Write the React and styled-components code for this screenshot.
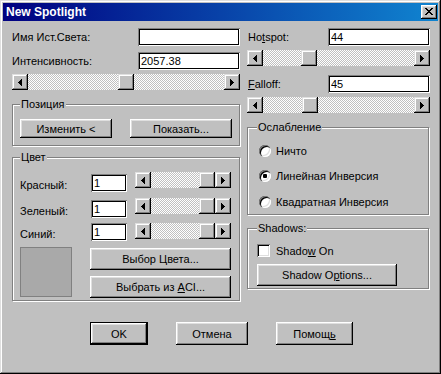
import React from 'react';
import styled, { createGlobalStyle } from 'styled-components';

const Global = createGlobalStyle`
  html, body { margin: 0; padding: 0; background: #c0c0c0; }
  body { font-family: "Liberation Sans", Arial, sans-serif; font-size: 11px; color: #000; }
  * { box-sizing: border-box; }
`;

const raised = `box-shadow: inset -1px -1px #000, inset 1px 1px #fff, inset -2px -2px #808080, inset 2px 2px #dfdfdf;`;
const raisedSoft = `box-shadow: inset -1px -1px #000, inset 1px 1px #dfdfdf, inset -2px -2px #808080, inset 2px 2px #fff;`;
const sunken = `box-shadow: inset 1px 1px #808080, inset -1px -1px #fff, inset 2px 2px #000, inset -2px -2px #000;`;

const Window = styled.div`
  width: 441px;
  height: 374px;
  padding: 3px;
  background: #c0c0c0;
  box-shadow: inset -1px -1px #000, inset 1px 1px #dfdfdf, inset -2px -2px #808080, inset 2px 2px #fff;
  display: flex;
  flex-direction: column;
`;

const TitleBar = styled.div`
  height: 18px;
  display: flex;
  align-items: center;
  justify-content: space-between;
  padding: 0 1px 0 3px;
  background: linear-gradient(90deg, #000080, #1084d0);
  color: #fff;
  font-weight: bold;
  font-size: 12px;
`;

const CloseButton = styled.div`
  width: 16px;
  height: 14px;
  background: #c0c0c0;
  ${raised}
  display: flex;
  align-items: center;
  justify-content: center;
  padding-bottom: 1px;
`;

const Body = styled.div`
  padding: 7px 9px 0 9px;
  display: flex;
  flex-direction: column;
`;

const Columns = styled.div`
  display: grid;
  grid-template-columns: 228px 183px;
  column-gap: 7px;
  align-items: start;
`;

const Column = styled.div`
  display: flex;
  flex-direction: column;
`;

const FieldRow = styled.div`
  display: flex;
  align-items: center;
  justify-content: space-between;
  height: 18px;
  margin-top: ${p => p.$mt || 0}px;
`;

const Label = styled.span`
  padding-left: ${p => p.$pl || 0}px;
  white-space: nowrap;
`;

const TextInput = styled.input`
  width: ${p => p.$w}px;
  height: 18px;
  border: none;
  outline: none;
  margin: 0;
  padding: 0 3px;
  background: #fff;
  font: inherit;
  color: #000;
  ${sunken}
`;

const ScrollWrap = styled.div`
  display: flex;
  width: ${p => (p.$w ? `${p.$w}px` : '100%')};
  height: 16px;
  margin-top: ${p => p.$mt || 0}px;
  flex-shrink: 0;
`;

const ArrowBtn = styled.div`
  width: 16px;
  height: 16px;
  flex-shrink: 0;
  background: #c0c0c0;
  ${raisedSoft}
  display: flex;
  align-items: center;
  justify-content: center;
`;

const Track = styled.div`
  flex: 1;
  display: flex;
  background-color: #c0c0c0;
  background-image: conic-gradient(#fff 25%, #c0c0c0 0 50%, #fff 0 75%, #c0c0c0 0);
  background-size: 2px 2px;
`;

const Thumb = styled.div`
  width: 16px;
  height: 16px;
  flex-shrink: 0;
  background: #c0c0c0;
  margin-left: calc((100% - 16px) * ${p => p.$frac});
  ${raisedSoft}
`;

const Arrow = ({ dir }) => (
  <svg width="4" height="7" viewBox="0 0 4 7" shapeRendering="crispEdges">
    {dir === 'left' ? (
      <g fill="#000">
        <rect x="3" y="0" width="1" height="7" />
        <rect x="2" y="1" width="1" height="5" />
        <rect x="1" y="2" width="1" height="3" />
        <rect x="0" y="3" width="1" height="1" />
      </g>
    ) : (
      <g fill="#000">
        <rect x="0" y="0" width="1" height="7" />
        <rect x="1" y="1" width="1" height="5" />
        <rect x="2" y="2" width="1" height="3" />
        <rect x="3" y="3" width="1" height="1" />
      </g>
    )}
  </svg>
);

const ScrollBar = ({ frac, w, mt }) => (
  <ScrollWrap $w={w} $mt={mt}>
    <ArrowBtn><Arrow dir="left" /></ArrowBtn>
    <Track><Thumb $frac={frac} /></Track>
    <ArrowBtn><Arrow dir="right" /></ArrowBtn>
  </ScrollWrap>
);

const Group = styled.fieldset`
  margin: ${p => p.$mt || 0}px 0 0 0;
  padding: ${p => p.$pad};
  width: ${p => p.$w}px;
  min-width: 0;
  border: 1px solid #808080;
  box-shadow: 1px 1px 0 #fff, inset 1px 1px 0 #fff;
`;

const Legend = styled.legend`
  padding: 0 1px;
  margin: 0;
  line-height: 13px;
  height: 13px;
  background: #c0c0c0;
`;

const Button = styled.div`
  width: ${p => p.$w}px;
  height: ${p => p.$h || 23}px;
  margin-top: ${p => p.$mt || 0}px;
  display: flex;
  align-items: center;
  justify-content: center;
  background: #c0c0c0;
  white-space: pre;
  flex-shrink: 0;
  ${raised}
`;

const DefaultButton = styled(Button)`
  border: 1px solid #000;
`;

const ButtonPair = styled.div`
  display: flex;
  align-items: center;
  gap: 18px;
`;

const ColorRow = styled.div`
  display: flex;
  align-items: flex-start;
  height: 18px;
  margin-top: ${p => p.$mt || 0}px;
`;

const ColorLabel = styled.span`
  width: 71px;
  line-height: 18px;
  padding-top: 2px;
`;

const ColorScroll = styled.div`
  margin-left: 8px;
  margin-top: ${p => -(p.$lift || 0)}px;
`;

const SwatchRow = styled.div`
  display: flex;
  align-items: flex-start;
  margin-top: 6px;
  gap: 18px;
`;

const Swatch = styled.div`
  width: 52px;
  height: 50px;
  background: #a9a9a9;
  border: 1px solid #808080;
`;

const ButtonStack = styled.div`
  display: flex;
  flex-direction: column;
  gap: 6px;
  padding-top: 1px;
`;

const OptionRow = styled.div`
  display: flex;
  align-items: center;
  height: 13px;
  margin-top: ${p => p.$mt || 0}px;
  gap: ${p => p.$gap || 5}px;
  padding-left: ${p => p.$pl || 0}px;
`;

const Radio = styled.span`
  position: relative;
  width: 12px;
  height: 12px;
  border-radius: 50%;
  background: #fff;
  flex-shrink: 0;
  box-shadow: inset 1px 1px #808080, inset 2px 2px #000, inset -1px -1px #fff, inset -2px -2px #dfdfdf;
  &::after {
    content: '';
    display: ${p => (p.$checked ? 'block' : 'none')};
    position: absolute;
    left: 4px;
    top: 4px;
    width: 4px;
    height: 4px;
    border-radius: 1px;
    background: #000;
  }
`;

const Checkbox = styled.span`
  width: 13px;
  height: 13px;
  background: #fff;
  flex-shrink: 0;
  box-shadow: inset 1px 1px #808080, inset -1px -1px #fff, inset 2px 2px #000, inset -2px -2px #dfdfdf;
`;

const U = styled.span`
  text-decoration: underline;
  text-underline-offset: 1px;
`;

const BottomRow = styled.div`
  display: flex;
  gap: 28px;
  padding-left: 78px;
  margin-top: 21px;
`;

const CloseGlyph = () => (
  <svg width="8" height="7" viewBox="0 0 8 7" shapeRendering="crispEdges">
    <g fill="#000">
      <rect x="0" y="0" width="2" height="1" /><rect x="6" y="0" width="2" height="1" />
      <rect x="1" y="1" width="2" height="1" /><rect x="5" y="1" width="2" height="1" />
      <rect x="2" y="2" width="4" height="1" />
      <rect x="3" y="3" width="2" height="1" />
      <rect x="2" y="4" width="4" height="1" />
      <rect x="1" y="5" width="2" height="1" /><rect x="5" y="5" width="2" height="1" />
      <rect x="0" y="6" width="2" height="1" /><rect x="6" y="6" width="2" height="1" />
    </g>
  </svg>
);

export default function App() {
  return (
    <>
      <Global />
      <Window>
        <TitleBar>
          <span>New Spotlight</span>
          <CloseButton><CloseGlyph /></CloseButton>
        </TitleBar>
        <Body>
          <Columns>
            <Column>
              <FieldRow>
                <Label>Имя Ист.Света:</Label>
                <TextInput $w={102} defaultValue="" />
              </FieldRow>
              <FieldRow $mt={6}>
                <Label>Интенсивность:</Label>
                <TextInput $w={102} defaultValue="2057.38" />
              </FieldRow>
              <ScrollBar frac={0.5} mt={4} />

              <Group $mt={8} $w={228} $pad="8px 7px 7px 7px">
                <Legend>Позиция</Legend>
                <ButtonPair>
                  <Button $w={92} $h={19}><span>Изменить &lt;</span></Button>
                  <Button $w={102} $h={19}><span>Показать...</span></Button>
                </ButtonPair>
              </Group>

              <Group $mt={5} $w={228} $pad="10px 7px 2px 7px">
                <Legend>Цвет</Legend>
                <ColorRow>
                  <ColorLabel>Красный:</ColorLabel>
                  <TextInput $w={36} defaultValue="1" />
                  <ColorScroll $lift={2}><ScrollBar frac={1} w={96} /></ColorScroll>
                </ColorRow>
                <ColorRow $mt={8}>
                  <ColorLabel>Зеленый:</ColorLabel>
                  <TextInput $w={36} defaultValue="1" />
                  <ColorScroll $lift={2}><ScrollBar frac={1} w={96} /></ColorScroll>
                </ColorRow>
                <ColorRow $mt={5}>
                  <ColorLabel>Синий:</ColorLabel>
                  <TextInput $w={36} defaultValue="1" />
                  <ColorScroll $lift={0}><ScrollBar frac={1} w={96} /></ColorScroll>
                </ColorRow>
                <SwatchRow>
                  <Swatch />
                  <ButtonStack>
                    <Button $w={141} $h={22}><span>Выбор Цвета...</span></Button>
                    <Button $w={141} $h={22}><span>Выбрать из <U>A</U>CI...</span></Button>
                  </ButtonStack>
                </SwatchRow>
              </Group>
            </Column>

            <Column>
              <FieldRow>
                <Label $pl={1}>Ho<U>t</U>spot:</Label>
                <TextInput $w={102} defaultValue="44" />
              </FieldRow>
              <ScrollBar frac={38 / 135} mt={4} />
              <FieldRow $mt={9}>
                <Label $pl={1}><U>F</U>alloff:</Label>
                <TextInput $w={102} defaultValue="45" />
              </FieldRow>
              <ScrollBar frac={39 / 135} mt={4} />

              <Group $mt={8} $w={182} $pad="10px 9px 6px 9px">
                <Legend>Ослабление</Legend>
                <OptionRow $pl={2}><Radio /><span>Ничто</span></OptionRow>
                <OptionRow $pl={2} $mt={12}><Radio $checked /><span>Линейная Инверсия</span></OptionRow>
                <OptionRow $pl={2} $mt={13}><Radio /><span>Квадратная Инверсия</span></OptionRow>
              </Group>

              <Group $mt={7} $w={182} $pad="9px 9px 2px 9px">
                <Legend>Shadows:</Legend>
                <OptionRow $gap={6}><Checkbox /><span>Shado<U>w</U> On</span></OptionRow>
                <Button $w={140} $h={22} $mt={7}><span>Shadow O<U>p</U>tions...</span></Button>
              </Group>
            </Column>
          </Columns>

          <BottomRow>
            <DefaultButton $w={58} $h={23}><span>OK</span></DefaultButton>
            <Button $w={72} $h={23}><span>Отмена</span></Button>
            <Button $w={77} $h={23}><span>Помощ<U>ь</U></span></Button>
          </BottomRow>
        </Body>
      </Window>
    </>
  );
}
